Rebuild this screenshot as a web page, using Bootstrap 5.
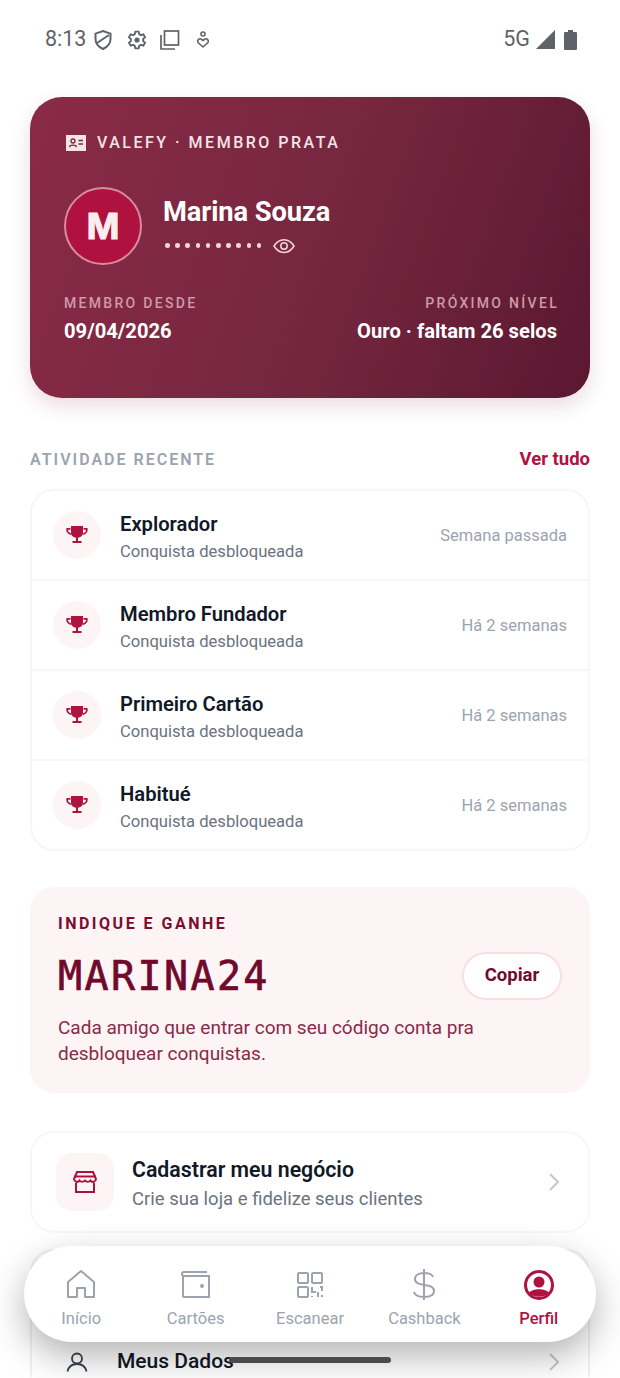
<!DOCTYPE html>
<html lang="pt-BR">
<head>
  <meta charset="UTF-8">
  <title>Valefy - Perfil</title>
  <link href="https://cdn.jsdelivr.net/npm/bootstrap@5.3.0/dist/css/bootstrap.min.css" rel="stylesheet">
  <style>
    body {
      background-color: #fff;
      font-family: Roboto, "Liberation Sans", sans-serif;
      color: #111827;
      width: 620px;
      height: 1378px;
      overflow: hidden;
      position: relative;
    }

    /* status bar */
    .status-bar {
      height: 79px;
      padding: 0 43px 0 45px;
      color: #5f6368;
      font-size: 21.5px;
    }
    .status-bar svg { display: block; }
    .shield-icon { margin-left: 8px; }
    .gear-icon { margin-left: 15px; }
    .copy-icon { margin-left: 13px; }
    .pin-icon { margin-left: 16px; }
    .net-label { margin-right: 6px; }

    /* member card */
    .member-card {
      margin: 18px 30px 0;
      height: 301px;
      padding: 36px 33px 0 34px;
      border-radius: 32px;
      color: #fff;
      background: linear-gradient(110deg, #8a2a47 0%, #772740 50%, #5a1830 100%);
      box-shadow: 0 8px 20px rgba(122, 30, 60, .16);
    }
    .member-brand {
      font-size: 16px;
      font-weight: 500;
      letter-spacing: 2.5px;
      color: #f5e3e8;
      line-height: 20px;
    }
    .brand-icon { margin: 0 11px 0 2px; }
    .member-top { margin-top: 34px; }
    .member-avatar {
      width: 78px;
      height: 78px;
      border-radius: 50%;
      background: #b0123f;
      border: 2px solid #d98ba0;
      font-size: 35px;
      font-weight: 700;
      color: #fbeef0;
      font-family: Inter, Roboto, sans-serif;
      -webkit-text-stroke: 1px #fbeef0;
    }
    .member-id {
      margin-left: 21px;
      padding-bottom: 3px;
    }
    .member-name {
      font-size: 27.3px;
      font-weight: 700;
      line-height: 32px;
      letter-spacing: -.1px;
    }
    .member-secret { margin: 10px 0 0 2px; }
    .dot-row { gap: 5.6px; }
    .dot-row i {
      display: block;
      width: 4.6px;
      height: 4.6px;
      border-radius: 50%;
      background: #f3d5dc;
    }
    .eye-icon { margin-left: 12px; }
    .member-foot { margin-top: 30px; }
    .member-label {
      font-size: 14px;
      font-weight: 500;
      letter-spacing: 2.3px;
      color: #cf9aaa;
      line-height: 16px;
    }
    .text-end .member-label { margin-right: -2px; }
    .member-value {
      font-size: 20.2px;
      font-weight: 700;
      line-height: 26px;
      margin-top: 7px;
    }

    /* section head */
    .section-head {
      margin: 50px 30px 0;
      height: 24px;
    }
    .section-title {
      font-size: 16px;
      font-weight: 600;
      letter-spacing: 2px;
      color: #9ca3af;
    }
    .section-link {
      font-size: 18.5px;
      font-weight: 700;
      color: #b0123f;
      text-decoration: none;
    }

    /* activity list */
    .activity-list {
      margin: 17px 30px 0;
      border: 2px solid #f7f7f8;
      border-radius: 24px;
      background: #fff;
      overflow: hidden;
    }
    .activity-row {
      height: 90px;
      padding: 0 21px;
      border-bottom: 2px solid #f7f7f8;
    }
    .activity-row:last-child { border-bottom: 0; height: 88px; }
    .trophy-wrap {
      width: 48px;
      height: 48px;
      border-radius: 50%;
      background: #fdf4f6;
      flex-shrink: 0;
    }
    .activity-text {
      margin-left: 19px;
      padding-top: 5px;
    }
    .activity-title {
      font-size: 20.2px;
      font-weight: 600;
      line-height: 26px;
    }
    .activity-sub {
      font-size: 16.6px;
      color: #6b7280;
      line-height: 24px;
      margin-top: 3px;
    }
    .activity-when {
      font-size: 16.5px;
      color: #9ca3af;
      white-space: nowrap;
      padding-top: 2px;
    }

    /* referral */
    .refer-box {
      margin: 36px 30px 0;
      height: 206px;
      padding: 27px 28px 0 28px;
      background: #fdf4f6;
      border-radius: 24px;
    }
    .refer-label {
      font-size: 16px;
      font-weight: 700;
      letter-spacing: 2.5px;
      color: #7a0e2e;
      line-height: 20px;
    }
    .refer-main { margin-top: 18px; }
    .refer-code {
      font-family: "DejaVu Sans Mono", "Liberation Mono", monospace;
      font-size: 40px;
      letter-spacing: 2.4px;
      color: #6f0a2a;
      line-height: 48px;
      -webkit-text-stroke: .7px #6f0a2a;
    }
    .btn-copy {
      width: 100px;
      height: 48px;
      padding: 0;
      border-radius: 24px;
      background: #fff;
      border: 2px solid #f9dfe4;
      font-size: 18.5px;
      font-weight: 700;
      color: #6f0a2a;
    }
    .refer-text {
      font-size: 19px;
      line-height: 26px;
      color: #8a2a47;
      margin: 15px 0 0;
      max-width: 440px;
    }

    /* link cards */
    .link-card {
      margin: 38px 30px 0;
      height: 102px;
      padding: 0 28px 0 24px;
      border: 2px solid #f7f7f8;
      border-radius: 24px;
      background: #fff;
    }
    .shop-wrap {
      width: 58px;
      height: 58px;
      border-radius: 16px;
      background: #fdf4f6;
      flex-shrink: 0;
    }
    .link-text {
      margin-left: 18px;
      padding-top: 4px;
    }
    .link-title {
      font-size: 21.3px;
      font-weight: 600;
      line-height: 28px;
    }
    .link-sub {
      font-size: 18.5px;
      color: #6b7280;
      line-height: 26px;
      margin-top: 2px;
    }
    /* cut by the bottom of the screen, so no bottom edge */
    .data-card {
      margin: 16px 30px 0;
      height: 128px;
      padding: 98px 28px 0 34px;
      border: 2px solid #f0f0f1;
      border-bottom: 0;
      border-radius: 24px 24px 0 0;
      background: #fff;
    }
    .data-row { height: 26px; }
    .data-title {
      font-size: 21px;
      font-weight: 500;
      margin-left: 29px;
    }

    /* bottom nav, floats over the page */
    .dock {
      position: absolute;
      left: 24px;
      top: 1246px;
      width: 572px;
      height: 96px;
      background: #fff;
      border-radius: 48px;
      box-shadow: 0 14px 36px rgba(0, 0, 0, .3);
    }
    .dock-item {
      flex: 1 1 0;
      padding-top: 22px;
      color: #9ca3af;
      font-size: 16.5px;
      line-height: 20px;
      text-decoration: none;
    }
    .dock-item svg { display: block; height: 34px; margin-bottom: 7px; }
    .dock-item.active { color: #b0123f; font-weight: 500; }
    .home-bar {
      position: absolute;
      left: 229px;
      top: 1357px;
      width: 162px;
      height: 6px;
      border-radius: 3px;
      background: #4a4a4c;
    }
  </style>
</head>
<body>
  <div class="status-bar d-flex align-items-center justify-content-between">
    <div class="d-flex align-items-center">
      <span>8:13</span>
      <svg class="shield-icon" width="18" height="22" viewBox="0 0 18 22" fill="none" stroke="#5f6368" stroke-width="2"><path d="M9 2 16.5 4.6V10c0 4.6-3 8-7.5 10C4.5 18 1.5 14.6 1.500 10V4.600Z"/><path d="M3 14 15 6"/></svg>
      <svg class="gear-icon" width="20" height="20" viewBox="0 0 24 24" fill="none" stroke="#5f6368" stroke-width="2.2"><path d="M10 2h4l.6 3 2.200 1.200 2.900-1 2 3.500-2.300 2v2.600l2.300 2-2 3.500-2.900-1-2.200 1.200-.6 3h-4l-.6-3-2.200-1.200-2.900 1-2-3.500 2.300-2v-2.600l-2.300-2 2-3.500 2.900 1L9.400 5Z"/><circle cx="12" cy="12" r="2" fill="#5f6368"/></svg>
      <svg class="copy-icon" width="20" height="20" viewBox="0 0 20 20" fill="none" stroke="#5f6368" stroke-width="1.700"><rect x="4.500" y="1" width="14" height="14"/><path d="M1 5v14h14"/></svg>
      <svg class="pin-icon" width="14" height="18" viewBox="0 0 14 18" fill="none" stroke="#5f6368" stroke-width="1.600"><circle cx="7" cy="3" r="2"/><path d="M7 16 2 11.500C.8 9.500 3 7 5 8l2 1.500L9 8c2-1 4.200 1.500 3 3.500Z"/></svg>
    </div>
    <div class="d-flex align-items-center">
      <span class="net-label">5G</span>
      <svg width="20" height="20" viewBox="0 0 20 20" fill="#5f6368"><path d="M19 0v19H0Z"/></svg>
      <svg class="ms-2" width="13" height="20" viewBox="0 0 13 20" fill="#5f6368"><path d="M4 0h5v2h3a1 1 0 0 1 1 1v16a1 1 0 0 1-1 1H1a1 1 0 0 1-1-1V3a1 1 0 0 1 1-1h3Z"/></svg>
    </div>
  </div>

  <div class="member-card d-flex flex-column">
    <div class="member-brand d-flex align-items-center">
      <svg class="brand-icon" width="20" height="16" viewBox="0 0 20 16"><rect width="20" height="16" fill="#f5e3e8"/><circle cx="7" cy="6" r="2" fill="none" stroke="#772740" stroke-width="1.300"/><path d="M3.500 12c.5-2.500 6.500-2.500 7 0M12.500 5.500h4.500M12.500 9h4.500" fill="none" stroke="#772740" stroke-width="1.300"/></svg>
      <span>VALEFY · MEMBRO PRATA</span>
    </div>
    <div class="member-top d-flex align-items-center">
      <div class="member-avatar d-flex align-items-center justify-content-center">M</div>
      <div class="member-id">
        <div class="member-name">Marina Souza</div>
        <div class="member-secret d-flex align-items-center">
          <div class="dot-row d-flex">
            <i></i><i></i><i></i><i></i><i></i><i></i><i></i><i></i><i></i><i></i>
          </div>
          <svg class="eye-icon" width="22" height="16" viewBox="0 0 22 16" fill="none" stroke="#f3d5dc" stroke-width="1.500"><path d="M1 8c5-8.500 15-8.500 20 0-5 8.500-15 8.500-20 0Z"/><circle cx="11" cy="8" r="3.200"/></svg>
        </div>
      </div>
    </div>
    <div class="member-foot d-flex justify-content-between">
      <div>
        <div class="member-label">MEMBRO DESDE</div>
        <div class="member-value">09/04/2026</div>
      </div>
      <div class="text-end">
        <div class="member-label">PRÓXIMO NÍVEL</div>
        <div class="member-value">Ouro · faltam 26 selos</div>
      </div>
    </div>
  </div>

  <div class="section-head d-flex align-items-center justify-content-between">
    <span class="section-title">ATIVIDADE RECENTE</span>
    <a class="section-link" href="#">Ver tudo</a>
  </div>

  <div class="activity-list" id="activityList"></div>

  <div class="refer-box">
    <div class="refer-label">INDIQUE E GANHE</div>
    <div class="refer-main d-flex align-items-center justify-content-between">
      <div class="refer-code">MARINA24</div>
      <button class="btn btn-copy">Copiar</button>
    </div>
    <p class="refer-text">Cada amigo que entrar com seu código conta pra desbloquear conquistas.</p>
  </div>

  <div class="link-card d-flex align-items-center">
    <div class="shop-wrap d-flex align-items-center justify-content-center">
      <svg width="26" height="24" viewBox="0 0 26 24" fill="none" stroke="#a8123f" stroke-width="2"><path d="M5 2h16l3 7a3 3 0 0 1-5.500 1.500A3.500 3.500 0 0 1 13 10.500a3.500 3.500 0 0 1-5.500 0A3 3 0 0 1 2 9Z"/><path d="M4 13v9h18v-9M2 6.500h22"/></svg>
    </div>
    <div class="link-text flex-grow-1">
      <div class="link-title">Cadastrar meu negócio</div>
      <div class="link-sub">Crie sua loja e fidelize seus clientes</div>
    </div>
    <svg width="12" height="20" viewBox="0 0 12 20" fill="none" stroke="#c4c8ce" stroke-width="2"><path d="m2 2 8 8-8 8"/></svg>
  </div>

  <div class="data-card">
    <div class="data-row d-flex align-items-center">
      <svg width="22" height="20" viewBox="0 0 22 20" fill="none" stroke="#374151" stroke-width="1.800"><circle cx="11" cy="6.500" r="5"/><path d="M1.500 19.500c1-4.500 4.500-7.500 9.500-7.500s8.500 3 9.500 7.500"/></svg>
      <div class="data-title flex-grow-1">Meus Dados</div>
      <svg width="12" height="20" viewBox="0 0 12 20" fill="none" stroke="#c4c8ce" stroke-width="2"><path d="m2 2 8 8-8 8"/></svg>
    </div>
  </div>

  <nav class="dock d-flex">
    <a class="dock-item d-flex flex-column align-items-center" href="#">
      <svg width="30" height="34" viewBox="0 0 30 34" fill="none" stroke="#9ca3af" stroke-width="2"><path d="M2 29V14L15 3l13 11v15H19V20h-8v9Z" stroke-linejoin="round"/></svg>
      Início
    </a>
    <a class="dock-item d-flex flex-column align-items-center" href="#">
      <svg width="30" height="34" viewBox="0 0 30 34" fill="none" stroke="#9ca3af" stroke-width="2"><path d="M2 8v20a1 1 0 0 0 1 1h25V8H3a1 1 0 0 1 0-4h23"/><circle cx="21" cy="18" r="1" fill="#9ca3af"/></svg>
      Cartões
    </a>
    <a class="dock-item d-flex flex-column align-items-center" href="#">
      <svg width="28" height="34" viewBox="0 0 28 34" fill="none" stroke="#9ca3af" stroke-width="2"><rect x="2" y="5" width="10" height="10" rx="1"/><rect x="16" y="5" width="10" height="10" rx="1"/><rect x="2" y="19" width="10" height="10" rx="1"/><path d="M16 19v5h4M24 19h2v4M16 28v1M22 24v5M26 27v2"/></svg>
      Escanear
    </a>
    <a class="dock-item d-flex flex-column align-items-center" href="#">
      <svg width="24" height="34" viewBox="0 0 24 34" fill="none" stroke="#9ca3af" stroke-width="2"><path d="M12 1v31M21 9c-1-3-4-4-9-4-5 0-9 2-9 6 0 9 19 3 19 12 0 4-4 6-10 6-5 0-9-2-10-5"/></svg>
      Cashback
    </a>
    <a class="dock-item active d-flex flex-column align-items-center" href="#">
      <svg width="30" height="34" viewBox="0 0 30 34"><circle cx="15" cy="17" r="13.500" fill="none" stroke="#b0123f" stroke-width="3"/><circle cx="15" cy="14" r="5.500" fill="#b0123f"/><path d="M5 25c3-5 17-5 20 0-5 5-15 5-20 0Z" fill="#b0123f"/></svg>
      Perfil
    </a>
  </nav>
  <div class="home-bar"></div>

  <script>
    const activities = [
      ['Explorador', 'Semana passada'],
      ['Membro Fundador', 'Há 2 semanas'],
      ['Primeiro Cartão', 'Há 2 semanas'],
      ['Habitué', 'Há 2 semanas']
    ];
    const trophy = '<svg width="24" height="20" viewBox="0 0 24 20" fill="#b0123f"><path d="M6 1h12v6.500c0 3-2.500 5-5 5.300V16h3.500v2h-9v-2H11v-3.200c-2.500-.3-5-2.300-5-5.300Z"/><path d="M5.500 3H1.500C.500 7 3 9.500 6.500 10l-.5-1.700C4 8 3 6.500 3 4.800h2.500ZM18.500 3h4c1 4-1.500 6.500-5 7l.5-1.700c2-.3 3-1.800 3-3.500h-2.500Z"/></svg>';
    document.getElementById('activityList').innerHTML = activities.map(a => `
      <div class="activity-row d-flex align-items-center">
        <div class="trophy-wrap d-flex align-items-center justify-content-center">${trophy}</div>
        <div class="activity-text flex-grow-1">
          <div class="activity-title">${a[0]}</div>
          <div class="activity-sub">Conquista desbloqueada</div>
        </div>
        <div class="activity-when">${a[1]}</div>
      </div>`).join('');
  </script>
  <script src="https://cdn.jsdelivr.net/npm/bootstrap@5.3.0/dist/js/bootstrap.bundle.min.js"></script>
</body>
</html>
